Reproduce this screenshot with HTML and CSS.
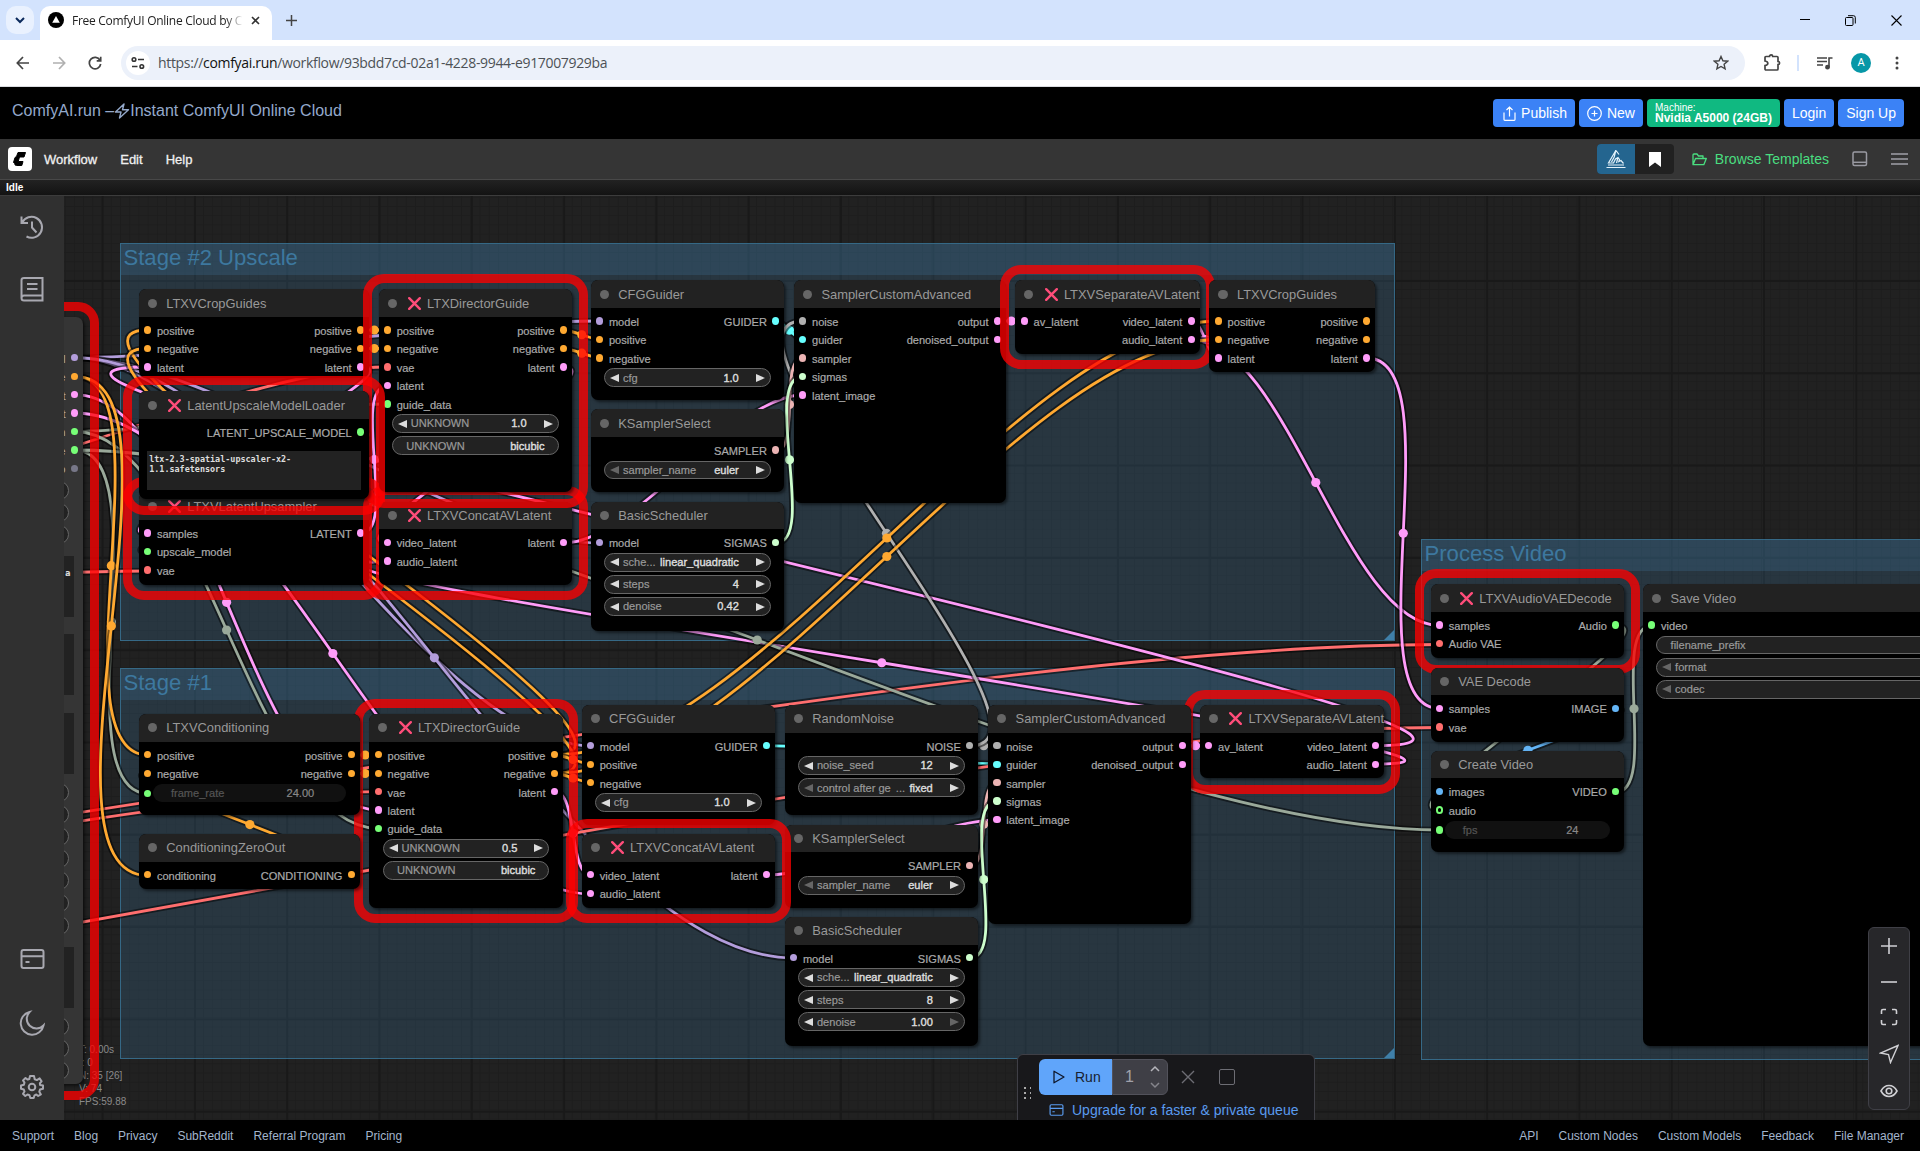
FILE: index.html
```html
<!DOCTYPE html>
<html lang="en">
<head>
<meta charset="utf-8">
<title>Free ComfyUI Online Cloud by ComfyAI.run</title>
<link rel="stylesheet" href="styles.css">
</head>
<body>
<svg class="defs" width="0" height="0">
  <symbol id="cross" viewBox="0 0 13 13"><path d="M1.2 1.2 11.8 11.8M11.8 1.2 1.2 11.8" fill="none" stroke="#ff4d7a" stroke-width="2.4" stroke-linecap="round"/></symbol>
  <symbol id="card" viewBox="0 0 24 24"><rect x="1" y="3" width="22" height="18" rx="2" fill="none" stroke="currentColor" stroke-width="2"/><path d="M1 9.3H23M5 15H9" fill="none" stroke="currentColor" stroke-width="2"/></symbol>
</svg>

<div class="tabstrip">
  <div class="tab-search"><svg width="10" height="7" viewBox="0 0 10 7"><path d="M1 1l4 4 4-4" fill="none" stroke="#0b2a5c" stroke-width="2"/></svg></div>
  <div class="tab">
    <svg width="16" height="16" viewBox="0 0 16 16"><circle cx="8" cy="8" r="8"/><path d="M8 4 11.8 10.8H4.2z" fill="#fff"/></svg>
    <span class="tab-title">Free ComfyUI Online Cloud by C</span>
    <svg width="9" height="9" viewBox="0 0 9 9"><path d="M1 1l7 7M8 1 1 8" stroke="#333" stroke-width="1.6"/></svg>
  </div>
  <svg class="new-tab" width="11" height="11" viewBox="0 0 11 11"><path d="M5.5 0V11M0 5.5H11" stroke="#444" stroke-width="1.5"/></svg>
  <div class="win">
    <svg width="10" height="10" viewBox="0 0 10 10"><path d="M0 4.5H10" stroke="#000"/></svg>
    <svg width="11" height="11" viewBox="0 0 11 11" fill="none" stroke="#000"><rect x=".5" y="2.5" width="7.5" height="8" rx="1"/><path d="M3 .7H8.5Q10.3.7 10.3 2.5V8.5"/></svg>
    <svg width="11" height="11" viewBox="0 0 11 11"><path d="M.5.5l10 10M10.500.5l-10 10" stroke="#000" stroke-width="1.1"/></svg>
  </div>
</div>

<div class="navbar">
  <div class="nav-icons">
    <svg width="14" height="14" viewBox="0 0 14 14" fill="none" stroke="#444" stroke-width="1.7"><path d="M13 7H1.500M7 1 1.300 7 7 13"/></svg>
    <svg width="14" height="14" viewBox="0 0 14 14" fill="none" stroke="#b0b0b0" stroke-width="1.7"><path d="M1 7H12.500M7 1l5.700 6L7 13"/></svg>
    <svg width="14" height="14" viewBox="0 0 14 14" fill="none" stroke="#444" stroke-width="1.7"><path d="M12 4.200A5.700 5.700 0 1 0 12.700 8M12.700.8V4.800H8.700"/></svg>
  </div>
  <div class="url">
    <span class="site"><svg width="14" height="14" viewBox="0 0 14 14" fill="none" stroke="#333" stroke-width="1.6"><circle cx="3" cy="3.500" r="1.800"/><path d="M7 3.500H13M1 10.500H6.500"/><circle cx="10.800" cy="10.500" r="1.800"/></svg></span>
    <span class="url-text">https://<b>comfyai.run</b>/workflow/93bdd7cd-02a1-4228-9944-e917007929ba</span>
    <svg class="star" width="16" height="16" viewBox="0 0 16 16"><path d="M8 1.500l1.900 4.300 4.700.4-3.500 3.100 1 4.600L8 11.500l-4.100 2.400 1-4.600L1.400 6.200l4.700-.4z" fill="none" stroke="#444" stroke-width="1.400"/></svg>
  </div>
  <div class="nav-right">
    <svg width="18" height="18" viewBox="0 0 18 18" fill="none" stroke="#444" stroke-width="1.700"><path d="M2 3.500Q2 2.500 3 2.500H6.500A1.600 1.600 0 0 1 9.700 2.500H14Q15 2.500 15 3.500V7.500A1.600 1.600 0 0 1 15 10.700V15Q15 16 14 16H3Q2 16 2 15V11.500Q5 11 4.800 9.300 4.800 7.500 2 7z"/></svg>
    <i class="sep"></i>
    <svg width="16" height="14" viewBox="0 0 16 14" fill="none" stroke="#444" stroke-width="1.600"><path d="M0 2H10M0 5.500H10M0 9H6M12 11.500V2H15.500"/><circle cx="10.500" cy="11.200" r="1.600" fill="#444"/></svg>
    <span class="avatar">A</span>
    <svg width="4" height="14" viewBox="0 0 4 14" fill="#444"><circle cx="2" cy="2" r="1.500"/><circle cx="2" cy="7" r="1.500"/><circle cx="2" cy="12" r="1.500"/></svg>
  </div>
</div>

<header class="site-header">
  <div class="brand">ComfyAI.run –<svg width="16" height="16" viewBox="0 0 16 16"><path d="M10 1 1.500 9H7L5.500 15 14.500 6.800H8.500z" fill="none" stroke="currentColor" stroke-width="1.400" stroke-linejoin="round"/></svg>Instant ComfyUI Online Cloud</div>
  <div class="actions">
    <a class="btn"><svg width="13" height="15" viewBox="0 0 13 15" fill="none" stroke="#fff" stroke-width="1.200"><path d="M1 6.500V13.500Q1 14.300 1.800 14.300H11.200Q12 14.300 12 13.500V6.500M6.500 10.500V1.200M3.500 4 6.500 1l3 3"/></svg>Publish</a>
    <a class="btn new"><svg width="15" height="15" viewBox="0 0 15 15" fill="none" stroke="#fff" stroke-width="1.200"><circle cx="7.500" cy="7.500" r="6.800"/><path d="M7.500 4.500v6M4.500 7.500h6"/></svg>New</a>
    <a class="btn machine"><small>Machine:</small><b>Nvidia A5000 (24GB)</b></a>
    <a class="btn">Login</a>
    <a class="btn">Sign Up</a>
  </div>
</header>

<nav class="menubar">
  <svg class="logo" width="24" height="24" viewBox="0 0 24 24"><rect width="24" height="24" rx="4" fill="#fff"/><path d="M10 5.500H17.500L16 10H11.500L10.200 14.500H15L13.800 18.500H8.500Q6.500 18.500 6.800 16.500L5.500 15.500 7 10.500 8.500 9.500z" fill="#000" stroke="#000" stroke-linejoin="round"/></svg>
  <a>Workflow</a><a>Edit</a><a>Help</a>
  <div class="menu-right">
    <div class="toggle">
      <span class="on"><svg width="20" height="20" viewBox="0 0 20 20" fill="none" stroke="#e4f2fa" stroke-width="1.200"><path d="M.5 18.500H19.500M2 16H18M9.800 1.500 2.500 14H7.500L9.500 10 12 8.500 13.500 10.500 12.800 12.500 15 11.500 17.500 14.500M9.800 1.500 8.200 8 5.500 13M10 1.500 13 5.500M12 8.500 10.500 14"/></svg></span>
      <span><svg width="12" height="15" viewBox="0 0 12 15"><path d="M0 0H12V15L6 10.500 0 15z" fill="#fff"/></svg></span>
    </div>
    <a class="templates"><svg width="15" height="13" viewBox="0 0 15 13" fill="none" stroke="currentColor" stroke-width="1.300" stroke-linejoin="round"><path d="M1 11.500V2Q1 1 2 1H5L6.500 3H11V5.500M1 11.700 3.500 5.500H14.300L11.800 11.700z"/></svg>Browse Templates</a>
    <svg class="dock" width="16" height="16" viewBox="0 0 16 16" fill="none" stroke="#9a9aa2" stroke-width="1.500"><rect x="1" y="1" width="13.500" height="13.500" rx="1.500"/><path d="M1 11.300H14.500"/></svg>
    <svg width="17" height="12" viewBox="0 0 17 12" stroke="#a0a0a8" stroke-width="1.500"><path d="M0 1H17M0 6H17M0 11H17"/></svg>
  </div>
</nav>
<div class="status">Idle</div>

<main class="stage">
  <aside class="sidebar">
    <span><svg width="26" height="26" viewBox="0 0 26 26"><path d="M2.500 2.500V9H9M3.200 8.500A10.500 10.500 0 1 1 7.500 22.500M13 7.500V13.500L17.500 18.500"/></svg></span>
    <span><svg width="24" height="26" viewBox="0 0 24 26"><path d="M4 2H22.500V24.500H4Q1.500 24.500 1.500 22V4Q1.500 2 4 2zM1.500 22Q1.500 19.500 4 19.500H22.500M7 8H17.500M7 13H17.500"/></svg></span>
    <span class="push"><svg width="25" height="24"><use href="#card"/></svg></span>
    <span><svg width="26" height="26" viewBox="0 0 26 26"><path d="M10.500 2A11.500 11.500 0 1 0 24.500 15.500A9.500 9.500 0 0 1 10.500 2z"/></svg></span>
    <span><svg width="26" height="26" viewBox="0 0 26 26"><circle cx="13" cy="13" r="3.300"/><path stroke-linejoin="round" d="M11 2H15L15.700 5.200 17.900 6.100 20.600 4.400 22.600 7.400 20.900 9.200 21 10.900 24 11.500V14.800L21 15.500 20.300 17.700 21.900 20.400 19.200 22 17.300 20.500 15.500 21.300 14.700 24H11.300L10.500 21.200 8.500 20.500 6.300 22 4 19.700 5.500 17.500 4.800 15.500 2 14.800V11.500L4.900 10.700 5.500 8.600 4 6.400 6.500 4 8.700 5.600 10.300 5z"/></svg></span>
  </aside>

  <section class="canvas">
    <div class="world">
      <div class="group g-upscale"><h2>Stage #2 Upscale</h2></div>
      <div class="group g-stage1"><h2>Stage #1</h2></div>
      <div class="group g-process"><h2>Process Video</h2></div>

      <svg class="links" width="1920" height="1151"></svg>

      <div class="stats"><span>T: 0.00s</span><span>I: 0</span><span>N: 35 [26]</span><span>V: 74</span><span>FPS:59.88</span></div>

      <article class="node n-sep1 error">
        <header><i></i><svg class="x"><use href="#cross"/></svg>LTXVSeparateAVLatent</header>
        <div class="row"><span class="in pink">av_latent</span><span class="out pink">video_latent</span></div>
        <div class="row"><span class="out pink">audio_latent</span></div>
      </article>
      <article class="node n-crop2">
        <header><i></i>LTXVCropGuides</header>
        <div class="row"><span class="in orange">positive</span><span class="out orange">positive</span></div>
        <div class="row"><span class="in orange">negative</span><span class="out orange">negative</span></div>
        <div class="row"><span class="in pink">latent</span><span class="out pink">latent</span></div>
      </article>
      <article class="node n-upsampler error">
        <header><i></i><svg class="x"><use href="#cross"/></svg>LTXVLatentUpsampler</header>
        <div class="row"><span class="in pink">samples</span><span class="out pink">LATENT</span></div>
        <div class="row"><span class="in green">upscale_model</span></div>
        <div class="row"><span class="in red">vae</span></div>
      </article>
      <article class="node n-crop1">
        <header><i></i>LTXVCropGuides</header>
        <div class="row"><span class="in orange">positive</span><span class="out orange">positive</span></div>
        <div class="row"><span class="in orange">negative</span><span class="out orange">negative</span></div>
        <div class="row"><span class="in pink">latent</span><span class="out pink">latent</span></div>
      </article>
      <article class="node n-concat1 error">
        <header><i></i><svg class="x"><use href="#cross"/></svg>LTXVConcatAVLatent</header>
        <div class="row"><span class="in pink">video_latent</span><span class="out pink">latent</span></div>
        <div class="row"><span class="in pink">audio_latent</span></div>
      </article>
      <article class="node n-guide1 error">
        <header><i></i><svg class="x"><use href="#cross"/></svg>LTXDirectorGuide</header>
        <div class="row"><span class="in orange">positive</span><span class="out orange">positive</span></div>
        <div class="row"><span class="in orange">negative</span><span class="out orange">negative</span></div>
        <div class="row"><span class="in red">vae</span><span class="out pink">latent</span></div>
        <div class="row"><span class="in pink">latent</span></div>
        <div class="row"><span class="in green">guide_data</span></div>
        <div class="widget"><b></b><em>UNKNOWN</em><strong>1.0</strong><b></b></div>
        <div class="widget plain"><em>UNKNOWN</em><strong>bicubic</strong></div>
      </article>
      <article class="node n-loader error">
        <header><i></i><svg class="x"><use href="#cross"/></svg>LatentUpscaleModelLoader</header>
        <div class="row"><span class="out green">LATENT_UPSCALE_MODEL</span></div>
        <div class="textbox">ltx-2.3-spatial-upscaler-x2-<br>1.1.safetensors</div>
      </article>
      <article class="node n-cfg1">
        <header><i></i>CFGGuider</header>
        <div class="row"><span class="in purple">model</span><span class="out cyan">GUIDER</span></div>
        <div class="row"><span class="in orange">positive</span></div>
        <div class="row"><span class="in orange">negative</span></div>
        <div class="widget"><b></b><em>cfg</em><strong>1.0</strong><b></b></div>
      </article>
      <article class="node n-ks1">
        <header><i></i>KSamplerSelect</header>
        <div class="row"><span class="out rose">SAMPLER</span></div>
        <div class="widget"><b class="off"></b><em>sampler_name</em><strong>euler</strong><b></b></div>
      </article>
      <article class="node n-basic1">
        <header><i></i>BasicScheduler</header>
        <div class="row"><span class="in purple">model</span><span class="out mint">SIGMAS</span></div>
        <div class="widget"><b></b><em>sche...</em><strong>linear_quadratic</strong><b></b></div>
        <div class="widget"><b></b><em>steps</em><strong>4</strong><b></b></div>
        <div class="widget"><b></b><em>denoise</em><strong>0.42</strong><b></b></div>
      </article>
      <article class="node n-sampler1">
        <header><i></i>SamplerCustomAdvanced</header>
        <div class="row"><span class="in gray">noise</span><span class="out pink">output</span></div>
        <div class="row"><span class="in cyan">guider</span><span class="out pink">denoised_output</span></div>
        <div class="row"><span class="in rose">sampler</span></div>
        <div class="row"><span class="in mint">sigmas</span></div>
        <div class="row"><span class="in pink">latent_image</span></div>
      </article>

      <article class="node n-audiovae error">
        <header><i></i><svg class="x"><use href="#cross"/></svg>LTXVAudioVAEDecode</header>
        <div class="row"><span class="in pink">samples</span><span class="out green">Audio</span></div>
        <div class="row"><span class="in red">Audio VAE</span></div>
      </article>
      <article class="node n-vaedecode">
        <header><i></i>VAE Decode</header>
        <div class="row"><span class="in pink">samples</span><span class="out blue">IMAGE</span></div>
        <div class="row"><span class="in red">vae</span></div>
      </article>
      <article class="node n-create">
        <header><i></i>Create Video</header>
        <div class="row"><span class="in blue">images</span><span class="out green">VIDEO</span></div>
        <div class="row"><span class="in green hollow">audio</span></div>
        <div class="linked green"><span><em>fps</em><strong>24</strong></span></div>
      </article>
      <article class="node n-save">
        <header><i></i>Save Video</header>
        <div class="row"><span class="in green">video</span></div>
        <div class="widget plain"><em>filename_prefix</em></div>
        <div class="widget"><b class="off"></b><em>format</em></div>
        <div class="widget"><b class="off"></b><em>codec</em></div>
      </article>

      <article class="node n-guide2 error">
        <header><i></i><svg class="x"><use href="#cross"/></svg>LTXDirectorGuide</header>
        <div class="row"><span class="in orange">positive</span><span class="out orange">positive</span></div>
        <div class="row"><span class="in orange">negative</span><span class="out orange">negative</span></div>
        <div class="row"><span class="in red">vae</span><span class="out pink">latent</span></div>
        <div class="row"><span class="in pink">latent</span></div>
        <div class="row"><span class="in green">guide_data</span></div>
        <div class="widget"><b></b><em>UNKNOWN</em><strong>0.5</strong><b></b></div>
        <div class="widget plain"><em>UNKNOWN</em><strong>bicubic</strong></div>
      </article>
      <article class="node n-cond">
        <header><i></i>LTXVConditioning</header>
        <div class="row"><span class="in orange">positive</span><span class="out orange">positive</span></div>
        <div class="row"><span class="in orange">negative</span><span class="out orange">negative</span></div>
        <div class="linked green"><span><em>frame_rate</em><strong>24.00</strong></span></div>
      </article>
      <article class="node n-zero">
        <header><i></i>ConditioningZeroOut</header>
        <div class="row"><span class="in orange">conditioning</span><span class="out orange">CONDITIONING</span></div>
      </article>
      <article class="node n-cfg2">
        <header><i></i>CFGGuider</header>
        <div class="row"><span class="in purple">model</span><span class="out cyan">GUIDER</span></div>
        <div class="row"><span class="in orange">positive</span></div>
        <div class="row"><span class="in orange">negative</span></div>
        <div class="widget"><b></b><em>cfg</em><strong>1.0</strong><b></b></div>
      </article>
      <article class="node n-noise">
        <header><i></i>RandomNoise</header>
        <div class="row"><span class="out gray">NOISE</span></div>
        <div class="widget"><b></b><em>noise_seed</em><strong>12</strong><b></b></div>
        <div class="widget"><b class="off"></b><em>control after ge <span>...</span></em><strong>fixed</strong><b></b></div>
      </article>
      <article class="node n-ks2">
        <header><i></i>KSamplerSelect</header>
        <div class="row"><span class="out rose">SAMPLER</span></div>
        <div class="widget"><b class="off"></b><em>sampler_name</em><strong>euler</strong><b></b></div>
      </article>
      <article class="node n-concat2 error">
        <header><i></i><svg class="x"><use href="#cross"/></svg>LTXVConcatAVLatent</header>
        <div class="row"><span class="in pink">video_latent</span><span class="out pink">latent</span></div>
        <div class="row"><span class="in pink">audio_latent</span></div>
      </article>
      <article class="node n-basic2">
        <header><i></i>BasicScheduler</header>
        <div class="row"><span class="in purple">model</span><span class="out mint">SIGMAS</span></div>
        <div class="widget"><b></b><em>sche...</em><strong>linear_quadratic</strong><b></b></div>
        <div class="widget"><b></b><em>steps</em><strong>8</strong><b></b></div>
        <div class="widget"><b></b><em>denoise</em><strong>1.00</strong><b class="off"></b></div>
      </article>
      <article class="node n-sep2 error">
        <header><i></i><svg class="x"><use href="#cross"/></svg>LTXVSeparateAVLatent</header>
        <div class="row"><span class="in pink">av_latent</span><span class="out pink">video_latent</span></div>
        <div class="row"><span class="out pink">audio_latent</span></div>
      </article>
      <article class="node n-sampler2">
        <header><i></i>SamplerCustomAdvanced</header>
        <div class="row"><span class="in gray">noise</span><span class="out pink">output</span></div>
        <div class="row"><span class="in cyan">guider</span><span class="out pink">denoised_output</span></div>
        <div class="row"><span class="in rose">sampler</span></div>
        <div class="row"><span class="in mint">sigmas</span></div>
        <div class="row"><span class="in pink">latent_image</span></div>
      </article>

      <article class="node n-director error">
        <header></header>
        <div class="row"><span class="out purple">l</span></div>
        <div class="row"><span class="out orange">e</span></div>
        <div class="row"><span class="out pink">t</span></div>
        <div class="row"><span class="out pink">t</span></div>
        <div class="row"><span class="out green">n</span></div>
        <div class="row"><span class="out green">e</span></div>
        <div class="row"><span class="out slate">o</span></div>
        <div class="cap"></div><div class="cap"></div><div class="cap"></div>
        <div class="area first">a</div><div class="area"></div><div class="area"></div>
        <div class="cap"></div><div class="cap"></div><div class="cap"></div><div class="cap"></div><div class="cap"></div><div class="cap"></div><div class="cap"></div>
        <div class="area last"></div>
        <div class="cap"></div><div class="cap"></div><div class="cap"></div>
      </article>

      <div class="zoombar">
        <svg width="18" height="18" viewBox="0 0 18 18"><path d="M9 1V17M1 9H17"/></svg>
        <svg width="18" height="18" viewBox="0 0 18 18"><path d="M1 9H17"/></svg>
        <svg width="18" height="18" viewBox="0 0 18 18"><path d="M1.500 6V3Q1.500 1.500 3 1.500H6M12 1.500H15Q16.500 1.500 16.500 3V6M16.500 12V15Q16.500 16.500 15 16.500H12M6 16.500H3Q1.500 16.500 1.500 15V12"/></svg>
        <svg width="20" height="20" viewBox="0 0 20 20"><path d="M19 1.500 1.500 9 9.500 10.500 11.500 18.500z" stroke-width="1.400"/></svg>
        <svg width="18" height="18" viewBox="0 0 18 18"><path d="M1 9Q4 3.500 9 3.500T17 9Q14 14.500 9 14.500T1 9z"/><circle cx="9" cy="9" r="2.800"/></svg>
      </div>

      <div class="runner">
        <div class="grip"><i></i><i></i><i></i><i></i><i></i><i></i></div>
        <div class="run-body">
          <div class="run-row">
            <div class="run"><svg width="12" height="14" viewBox="0 0 12 14"><path d="M1 1.200 11 7 1 12.800z" fill="none" stroke="#0f172a" stroke-width="1.300" stroke-linejoin="round"/></svg>Run</div>
            <div class="count"><span>1</span><svg width="10" height="24" viewBox="0 0 10 24" fill="none" stroke-width="1.500"><path d="M1 6l4-4 4 4" stroke="#b5b5bb"/><path d="M1 18l4 4 4-4" stroke="#85858c"/></svg></div>
            <svg class="stop" width="14" height="14" viewBox="0 0 14 14"><path d="M1 1l12 12M13 1 1 13" stroke="#6d6d74" stroke-width="1.400"/></svg>
            <i class="square"></i>
          </div>
          <div class="upgrade"><svg width="15" height="14"><use href="#card"/></svg>Upgrade for a faster &amp; private queue</div>
        </div>
      </div>
    </div>
  </section>
</main>

<footer class="footer">
  <div><a>Support</a><a>Blog</a><a>Privacy</a><a>SubReddit</a><a>Referral Program</a><a>Pricing</a></div>
  <div><a>API</a><a>Custom Nodes</a><a>Custom Models</a><a>Feedback</a><a>File Manager</a></div>
</footer>
<script src="links.js"></script>
</body>
</html>
```
FILE: links.js
```js
// Draws the connections between node slots as horizontal splines.
const C = { purple: '#b39ddb', orange: '#ffa931', pink: '#ff9cf9', green: '#9aa99a', red: '#ff6e6e',
            cyan: '#66ffff', gray: '#b0b0b0', rose: '#ecb4b4', mint: '#cdffcd', blue: '#64b5f6' };
const links = [
  ['purple', 74.7, 357.7, 600, 321], ['purple', 74.7, 357.7, 600, 543],
  ['purple', 74.7, 357.7, 591, 745.7], ['purple', 74.7, 357.7, 794, 958],
  ['cyan', 776, 321, 803, 339.5], ['cyan', 766.7, 745.7, 997.4, 764],
  ['red', -160, 500, 387.5, 367], ['red', -500, 593, 148, 571],
  ['red', -840, 960, 378.5, 791.6], ['red', -840, 912, 1439.8, 644.5], ['red', -840, 1038, 1439.8, 727.5],
  ['green', 74.7, 431.5, 387.5, 404], ['green', 74.7, 431.5, 378.5, 828.5],
  ['green', 74.7, 450, 148, 793.5],
  ['green', 361, 432, 148, 552.5],
  ['pink', 1376, 745.7, 148, 367], ['pink', 1376, 764, 387.5, 561.5],
  ['green', 74.7, 450, 1439.8, 830],
  ['pink', 74.7, 394.7, 378.5, 810], ['pink', 74.7, 413, 591, 894],
  ['pink', 361, 367, 148, 534], ['pink', 361, 533, 387.5, 386],
  ['pink', 563.5, 367, 387.5, 543], ['pink', 563.5, 543, 803, 395],
  ['pink', 555, 791.6, 591, 875], ['pink', 766.7, 875, 997.4, 819.8],
  ['pink', 998, 321, 1024.5, 321], ['pink', 1191.7, 321, 1218.6, 358],
  ['pink', 1191.7, 339.5, 1439.8, 625.6], ['pink', 1366.7, 358, 1439.8, 708.5],
  ['pink', 1182, 745.7, 1209, 745.7],
  ['gray', 970, 745.7, 997.4, 745.7], ['gray', 970, 745.7, 803, 321],
  ['orange', 74.7, 376.3, 148, 755], ['orange', 74.7, 376.3, 148, 875.6],
  ['orange', 351.7, 875.6, 148, 773.5],
  ['orange', 351.7, 755, 378.5, 755], ['orange', 351.7, 773.5, 378.5, 773.5],
  ['orange', 555, 755, 148, 330], ['orange', 555, 773.5, 148, 348.5],
  ['orange', 555, 755, 1218.6, 321], ['orange', 555, 773.5, 1218.6, 339.5],
  ['orange', 555, 755, 591, 764], ['orange', 555, 773.5, 591, 782.5],
  ['orange', 361, 330, 387.5, 330], ['orange', 361, 348.5, 387.5, 348.5],
  ['orange', 563.5, 330, 600, 339.5], ['orange', 563.5, 348.5, 600, 357.8],
  ['rose', 776, 451, 803, 358], ['rose', 970, 866, 997.4, 782.6],
  ['mint', 776, 543, 803, 376.5], ['mint', 970, 958, 997.4, 801],
  ['green', 1616, 625.6, 1439.8, 810], ['blue', 1616, 708.5, 1439.8, 792],
  ['green', 1616, 792, 1652, 625.6]
];
const svg = document.querySelector('.links');
const add = (tag, attrs) => {
  const el = document.createElementNS('http://www.w3.org/2000/svg', tag);
  for (const k in attrs) el.setAttribute(k, attrs[k]);
  svg.append(el);
};
for (const [color, x0, y0, x1, y1] of links) {
  const k = Math.hypot(x1 - x0, y1 - y0) * 0.25;
  const d = `M${x0} ${y0}C${x0 + k} ${y0} ${x1 - k} ${y1} ${x1} ${y1}`;
  add('path', { d, class: 'link-shadow' });
  add('path', { d, class: 'link', stroke: C[color] });
  // links that begin outside the view carry their midpoint under a node or off screen
  if (x0 > 0) add('circle', { cx: (x0 + x1) / 2, cy: (y0 + y1) / 2, r: 4.6, fill: C[color] });
}
```
FILE: styles.css
```css
* { box-sizing: border-box; }
body { margin: 0; width: 1920px; height: 1151px; display: flex; flex-direction: column; overflow: hidden; background: #000; font-family: "Liberation Sans", Arial, sans-serif; }
.defs { position: absolute; }
svg { flex: none; }

/* browser chrome */
.tabstrip { height: 40px; flex: none; background: #d3e3fd; display: flex; align-items: center; padding-left: 6px; }
.tab-search { width: 28px; height: 28px; border-radius: 10px; background: #e9f1fe; display: flex; align-items: center; justify-content: center; }
.tab { margin: 6px 0 0 6px; width: 232px; height: 34px; background: #fff; border-radius: 10px 10px 0 0; display: flex; align-items: center; padding: 0 12px 6px 8px; gap: 8px; }
.tab-title { flex: 1; font: 12px "Open Sans", sans-serif; letter-spacing: -.28px; color: #222; white-space: nowrap; overflow: hidden; -webkit-mask-image: linear-gradient(90deg, #000 90%, transparent 100%); }
.new-tab { margin-left: 14px; }
.win { margin-left: auto; display: flex; gap: 35px; padding-right: 18px; align-items: center; }
.navbar { height: 47px; flex: none; background: #fff; border-bottom: 1px solid #dadce0; display: flex; align-items: center; }
.nav-icons { display: flex; gap: 22px; width: 121px; padding-left: 16px; }
.url { width: 1624px; height: 34px; border-radius: 17px; background: #ecf1fa; display: flex; align-items: center; padding: 0 16px 0 5px; }
.site { width: 24px; height: 24px; border-radius: 50%; background: #fff; display: flex; align-items: center; justify-content: center; }
.url-text { margin: -1px 0 0 8px; flex: 1; font: 14px "Open Sans", sans-serif; letter-spacing: -.33px; color: #4d5156; }
.url-text b { font-weight: 400; color: #111; }
.nav-right { display: flex; align-items: center; padding-left: 18px; }
.sep { width: 2px; height: 16px; background: #d3e3fd; margin: 0 18px 0 16px; }
.avatar { width: 20px; height: 20px; border-radius: 50%; background: #0797a7; color: #fff; font: 11px/20px Roboto, sans-serif; text-align: center; margin: 0 24px 0 18px; }

/* site header */
.site-header { height: 52px; flex: none; background: #000; display: flex; justify-content: space-between; padding: 0 16px 0 12px; }
.brand { display: flex; align-items: center; height: 47px; font-size: 16px; color: #94a9cb; white-space: pre; }
.actions { display: flex; gap: 4px; padding-top: 12px; }
.btn { height: 28px; border-radius: 4px; background: #3b82f6; color: #fff; font-size: 14px; display: flex; align-items: center; gap: 5px; padding: 0 8px; }
.btn:first-child { padding-left: 10px; }
.btn.machine { background: #10b981; flex-direction: column; align-items: flex-start; justify-content: center; gap: 0; }
.machine small { font-size: 10px; line-height: 10px; }
.machine b { font-size: 12px; line-height: 11px; }

/* menu bar */
.menubar { height: 40px; flex: none; background: #353535; display: flex; align-items: center; padding: 0 12px 0 8px; color: #f0f0f0; font-size: 13px; -webkit-text-stroke: .3px; }
.menubar > a { margin-right: 23px; }
.logo { margin-right: 12px; }
.menu-right { margin-left: auto; display: flex; align-items: center; -webkit-text-stroke: 0; }
.toggle { display: flex; width: 77px; height: 30px; border-radius: 4px; overflow: hidden; background: #212121; margin-right: 18px; }
.toggle span { flex: 1; display: flex; align-items: center; justify-content: center; }
.toggle .on { background: #24658f; }
.templates { display: flex; align-items: center; gap: 8px; color: #4ade80; font-size: 14px; margin-right: 23px; }
.dock { margin-right: 23px; }
.status { height: 17px; flex: none; background: linear-gradient(#222, #131313); border-top: 1px solid #484848; border-bottom: 1px solid #3c3c3c; color: #fff; font-size: 10px; font-weight: 700; line-height: 16px; padding-left: 6px; }

/* stage */
.stage { height: 924px; flex: none; display: flex; }
.sidebar { width: 64px; background: #303030; display: flex; flex-direction: column; flex: none; padding-bottom: 1px; }
.sidebar span { height: 64px; display: flex; align-items: center; justify-content: center; color: #a8a8b0; }
.sidebar span:first-child { height: 61px; }
.sidebar .push { margin-top: auto; }
.sidebar path, .sidebar circle { fill: none; stroke: #a8a8b0; stroke-width: 2; }
.canvas { flex: 1; position: relative; overflow: hidden; background: #212121; }
.world { position: absolute; left: -64px; top: -196px; width: 1920px; height: 1151px;
  background-image:
    linear-gradient(90deg, #191919 1.6px, transparent 1.6px), linear-gradient(#191919 1.6px, transparent 1.6px),
    linear-gradient(90deg, #1d1d1d 1px, transparent 1px), linear-gradient(#1d1d1d 1px, transparent 1px);
  background-size: 92.3px 92.3px, 92.3px 92.3px, 9.23px 9.23px, 9.23px 9.23px;
  background-position: 9.4px 3.2px; }
.group { position: absolute; border: 1px solid rgba(63,137,178,.62); background: rgba(63,120,158,.25); }
.group h2 { margin: 0; height: 31px; padding-left: 2.500px; background: rgba(63,120,158,.25); color: #3d789f; font-size: 22.1px; line-height: 27px; font-weight: 400; }
.group::after { content: ""; position: absolute; right: 0; bottom: 0; border: 5px solid; border-color: transparent #3f7fa8 #3f7fa8 transparent; }
.g-upscale { left: 120px; top: 243px; width: 1274.500px; height: 397.500px; }
.g-stage1 { left: 120px; top: 668px; width: 1274.500px; height: 391px; }
.g-process { left: 1421px; top: 538.500px; width: 700px; height: 521px; }
.links { position: absolute; left: 0; top: 0; }
.link, .link-shadow { fill: none; stroke-width: 2.8; }
.link-shadow { stroke: rgba(0,0,0,.5); stroke-width: 6.4; }
.stats { position: absolute; left: 79px; top: 1044px; display: flex; flex-direction: column; font-size: 10px; line-height: 12.9px; color: #8a8a8a; }

/* nodes */
.node { position: absolute; background: #000; border-radius: 7px; box-shadow: 2px 2px 3px rgba(0,0,0,.5); font-size: 11.07px; color: #aaa; -webkit-text-stroke: .2px; }
.node header { height: 27.700px; background: #222; border-radius: 7px 7px 0 0; display: flex; align-items: center; font-size: 12.900px; color: #999; white-space: nowrap; margin-bottom: 3.700px; -webkit-text-stroke: 0; }
.node header i { width: 9.200px; height: 9.200px; border-radius: 50%; background: #666; margin: 0 9.400px 0 9px; flex: none; }
.node header i + svg { margin: 0 6px 0 2px; width: 13px; height: 13px; }
.error::before { content: ""; position: absolute; inset: -15.500px; border: 9.200px solid rgba(255,0,0,.77); border-radius: 21px; pointer-events: none; }
.row { height: 18.450px; display: flex; justify-content: space-between; line-height: 18.450px; padding-top: 1.300px; }
.in, .out { display: flex; align-items: center; gap: 5.500px; height: 18.450px; }
.in { padding-left: 5.300px; }
.out { padding-right: 5px; flex-direction: row-reverse; margin-left: auto; }
.in::before, .out::before { content: ""; box-sizing: border-box; width: 7.400px; height: 7.400px; border-radius: 50%; background: var(--c); margin-top: -2.200px; }
.out::before { width: 7px; }
.hollow::before { background: #000; border: 2.200px solid var(--c); }
.orange { --c: #ffa931; } .pink { --c: #ff9cf9; } .purple { --c: #b39ddb; } .red { --c: #ff6e6e; }
.green { --c: #77ff77; } .cyan { --c: #66ffff; } .gray { --c: #b0b0b0; } .rose { --c: #ecb4b4; }
.mint { --c: #cdffcd; } .blue { --c: #64b5f6; } .slate { --c: #778; }
.widget { height: 18.900px; margin: 3.250px 13.600px 0; border: 1px solid #666; border-radius: 9.500px; background: #222; display: flex; align-items: center; padding: 0 5px; }
.row + .widget { margin-top: 1.400px; }
.widget b { width: 0; height: 0; border: 4.600px solid transparent; border-left: 0; border-right: 9px solid #ddd; }
.widget b:last-child { border-right: 0; border-left: 9px solid #ddd; margin-left: 17px; }
.widget b.off { border-right-color: #666; }
.widget b.off:last-child { border-left-color: #666; }
.widget em { font-style: normal; color: #999; margin: -.5px 0 0 3.700px; white-space: nowrap; }
.widget em span { margin-left: 2px; }
.widget strong { font-weight: 400; color: #ddd; margin: -.5px 0 0 auto; -webkit-text-stroke: .4px; }
.widget.plain { padding: 0 13px 0 9.500px; }
.textbox { margin: 10px 8.500px 0; height: 39px; background: #222; color: #ddd; font: bold 8.430px/10.800px "DejaVu Sans Mono", monospace; padding: 2.500px 2px; -webkit-text-stroke: 0; }
.linked { display: flex; align-items: center; padding-left: 5.300px; margin-top: 1.800px; }
.linked::before { content: ""; width: 7.400px; height: 7.400px; border-radius: 50%; background: var(--c); }
.linked span { flex: 1; height: 18.450px; border-radius: 9px; background: #111; margin: 0 13.800px 0 1.500px; padding: 0 32px 0 18px; display: flex; align-items: center; justify-content: space-between; }
.linked em { font-style: normal; color: #555; }
.linked strong { font-weight: 400; color: #888; }

.n-crop1 { left: 138.700px; top: 289.300px; width: 230.500px; height: 89px; }
.n-loader { left: 138.700px; top: 391.300px; width: 230.500px; height: 108px; }
.n-upsampler { left: 138.700px; top: 492.300px; width: 230.500px; height: 92.500px; }
.n-guide1 { left: 378.500px; top: 289.300px; width: 193.700px; height: 203px; }
.n-concat1 { left: 378.500px; top: 501.700px; width: 193.700px; height: 83px; }
.n-cfg1 { left: 590.700px; top: 280.300px; width: 193.700px; height: 119.500px; }
.n-ks1 { left: 590.700px; top: 409.300px; width: 193.700px; height: 83px; }
.n-basic1 { left: 590.700px; top: 501.700px; width: 193.700px; height: 129px; }
.n-sampler1 { left: 793.800px; top: 280.300px; width: 212.200px; height: 222.700px; }
.n-sep1 { left: 1015.300px; top: 280.300px; width: 184.500px; height: 73.700px; }
.n-crop2 { left: 1209.400px; top: 280.300px; width: 166px; height: 92px; }
.n-audiovae { left: 1430.600px; top: 584.300px; width: 193.700px; height: 74px; }
.n-vaedecode { left: 1430.600px; top: 667.600px; width: 193.700px; height: 74px; }
.n-create { left: 1430.600px; top: 750.700px; width: 193.700px; height: 101.600px; }
.n-save { left: 1642.800px; top: 584.300px; width: 420px; height: 462px; }
.n-cond { left: 138.700px; top: 714px; width: 221.300px; height: 101.400px; }
.n-zero { left: 138.700px; top: 834px; width: 221.300px; height: 55.400px; }
.n-guide2 { left: 369.300px; top: 714px; width: 193.700px; height: 193.700px; }
.n-cfg2 { left: 581.500px; top: 705px; width: 193.700px; height: 119.500px; }
.n-concat2 { left: 581.500px; top: 834px; width: 193.700px; height: 73.700px; }
.n-noise { left: 784.700px; top: 705px; width: 193.700px; height: 110.300px; }
.n-ks2 { left: 784.700px; top: 824.700px; width: 193.700px; height: 83px; }
.n-basic2 { left: 784.700px; top: 917px; width: 193.700px; height: 129px; }
.n-sampler2 { left: 988px; top: 705px; width: 202.500px; height: 219px; }
.n-sep2 { left: 1199.800px; top: 705px; width: 184.500px; height: 73px; }
/* the second crop node covers the outline of its neighbour, which covers the sampler */
.n-sep1 { z-index: 1; }
.n-crop2 { z-index: 2; }
.n-director { left: -240px; top: 317px; width: 323px; height: 767px; background: #353535; }
.n-director header { visibility: hidden; }
.cap { height: 18.900px; margin: 3.250px 13.600px 0; border: 1px solid #666; border-radius: 9.500px; background: #222; }
.area { height: 61px; margin: 17.500px 8.700px 0; background: #222; }
.area.first { margin-top: 12px; text-align: right; font: bold 8.430px/10.800px "DejaVu Sans Mono", monospace; padding: 12px 4px 0; color: #ddd; }
.area + .cap { margin-top: 9px; }
.area.last { margin-top: 12.500px; }

/* floating controls */
.zoombar { position: absolute; z-index: 5; left: 1868px; top: 927px; width: 42px; height: 183px; background: #27272a; border: 1px solid #3f3f46; border-radius: 6px; display: flex; flex-direction: column; justify-content: space-around; align-items: center; }
.zoombar svg { fill: none; stroke: #d0d0d4; stroke-width: 1.600; }
.runner { position: absolute; z-index: 5; left: 1017px; top: 1054px; width: 298px; height: 80px; background: #18181b; border: 1px solid #3f3f46; border-radius: 6px; display: flex; padding: 4px 0 0 6px; }
.grip { display: grid; grid-template-columns: 1.500px 1.500px; gap: 3.500px 4px; margin-top: 28px; width: 15px; align-content: start; }
.grip i { width: 1.500px; height: 1.500px; background: #aaa; }
.run-row { display: flex; align-items: center; height: 36px; }
.run { width: 73px; height: 36px; background: #60a5fa; border-radius: 6px 0 0 6px; color: #18212f; font-size: 14px; display: flex; align-items: center; gap: 10px; padding-left: 14px; }
.count { width: 56px; height: 36px; background: #3f3f46; border: 1px solid #52525b; border-radius: 0 6px 6px 0; display: flex; align-items: center; color: #a1a1aa; font-size: 16px; padding-left: 12px; gap: 16px; }
.stop { margin: 0 24px 0 13px; }
.square { width: 16px; height: 16px; border: 1.500px solid #6d6d74; border-radius: 2px; }
.upgrade { display: flex; align-items: center; gap: 8px; color: #5a9bef; font-size: 14px; padding-left: 10px; height: 30px; white-space: nowrap; }

.footer { height: 31px; flex: none; background: #000; display: flex; justify-content: space-between; align-items: center; padding: 0 16px 0 12px; font-size: 12px; color: #a3b5cc; }
.footer div { display: flex; gap: 20px; }
```
